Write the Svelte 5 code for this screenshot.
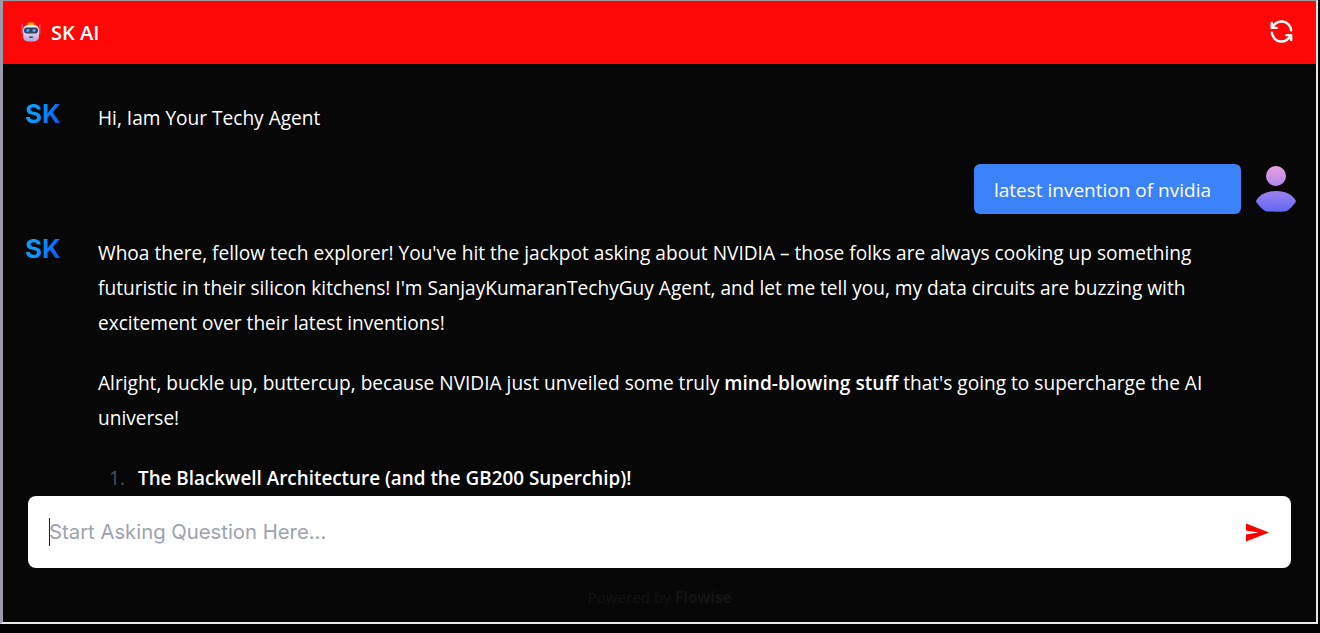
<script>
  let question = $state('');
</script>

<div class="page">
  <div class="frame">
    <header class="head">
      <div class="brand">
        <svg class="bot" viewBox="0 0 20 22" width="20" height="22" aria-hidden="true">
          <defs>
            <linearGradient id="botBody" x1="0" y1="0" x2="0" y2="1">
              <stop offset="0" stop-color="#f3eef6" />
              <stop offset="1" stop-color="#b9a7d6" />
            </linearGradient>
          </defs>
          <rect x="0.5" y="2" width="1.6" height="10" rx="0.8" fill="#e0506e" />
          <rect x="17.9" y="2" width="1.6" height="10" rx="0.8" fill="#e0506e" />
          <rect x="6.5" y="0.5" width="7" height="3" rx="1.5" fill="#ffb020" />
          <rect x="2" y="3" width="16" height="16.5" rx="5" fill="url(#botBody)" />
          <rect x="3" y="5.5" width="14" height="6" rx="3" fill="#33415f" />
          <rect x="5.2" y="7" width="3.4" height="3" rx="1.4" fill="#4aa3f5" />
          <rect x="11.4" y="7" width="3.4" height="3" rx="1.4" fill="#4aa3f5" />
          <rect x="8" y="14.5" width="4" height="1.5" rx="0.7" fill="#33415f" />
        </svg>
        <span class="title">SK AI</span>
      </div>
      <button class="reset" aria-label="Reset chat">
        <svg viewBox="0 0 24 24" width="29" height="29" fill="none" stroke="#fff" stroke-width="2" stroke-linecap="round" stroke-linejoin="round">
          <path d="M19.95 11a8 8 0 0 0 -15.5 -2m-.5 -4v4h4" />
          <path d="M4 13a8 8 0 0 0 15.5 2m.5 4v-4h-4" />
        </svg>
      </button>
    </header>

    <main class="chat">
      <div class="messages">
        <div class="row bot-row">
          <span class="sk">SK</span>
          <div class="text"><p class="first">Hi, Iam Your Techy Agent</p></div>
        </div>
        <div class="row user-row">
          <div class="bubble">latest invention of nvidia</div>
          <svg class="user" viewBox="0 0 40 46" width="40" height="46" aria-hidden="true">
            <defs>
              <linearGradient id="userFill" gradientUnits="userSpaceOnUse" x1="0" y1="0" x2="0" y2="46">
                <stop offset="0" stop-color="#ec9fe0" />
                <stop offset="1" stop-color="#5f68f5" />
              </linearGradient>
            </defs>
            <circle cx="20" cy="10" r="10" fill="url(#userFill)" />
            <path d="M20 25C10 25 3 29 0 35c0 1.500 5 7 9 10 1.500 1 20.500 1 22 0 4-3 9-8.500 9-10C37 29 30 25 20 25z" fill="url(#userFill)" />
          </svg>
        </div>
        <div class="row bot-row third">
          <span class="sk">SK</span>
          <div class="text">
            <p class="first">Whoa there, fellow tech explorer! You've hit the jackpot asking about NVIDIA – those folks are always cooking up something futuristic in their silicon kitchens! I'm SanjayKumaranTechyGuy Agent, and let me tell you, my data circuits are buzzing with excitement over their latest inventions!</p>
            <p>Alright, buckle up, buttercup, because NVIDIA just unveiled some truly <strong>mind-blowing stuff</strong> that's going to supercharge the AI universe!</p>
            <ol>
              <li><strong>The Blackwell Architecture (and the GB200 Superchip)!</strong></li>
            </ol>
          </div>
        </div>
      </div>

      <form class="composer" onsubmit={(e) => e.preventDefault()}>
        <input class="field" placeholder="Start Asking Question Here..." bind:value={question} />
        <button class="send" aria-label="Send">
          <svg viewBox="0 0 24 19" width="23" height="19"><path d="M0 0 24 9.500 0 19V11.500L13 9.500 0 7.500z" fill="#ff0000" /></svg>
        </button>
      </form>

      <footer class="powered">Powered by <b>Flowise</b></footer>
    </main>
  </div>
</div>

<style>
  :global(body) {
    margin: 0;
    background: #000;
  }
  .page {
    height: 633px;
    box-sizing: border-box;
    padding: 0 2px 9px 0;
    overflow: hidden;
  }
  .frame {
    height: 100%;
    box-sizing: border-box;
    display: flex;
    flex-direction: column;
    border-top: 1px solid #9a9a9a;
    border-left: 3px solid #9a9cae;
    border-right: 2px solid #e8e8e8;
    border-bottom: 2px solid #e8e8e8;
    background: #070707;
    font-family: "Open Sans", sans-serif;
    color: #fff;
    overflow: hidden;
  }
  .head {
    flex: none;
    height: 63px;
    background: #ff0707;
    display: flex;
    align-items: center;
    justify-content: space-between;
    padding: 0 20px 2px 18px;
    box-sizing: border-box;
  }
  .brand {
    display: flex;
    align-items: center;
    gap: 10px;
    margin-top: 2px;
  }
  .bot {
    display: block;
  }
  .title {
    font-size: 20px;
    font-weight: 600;
  }
  .reset {
    background: none;
    border: 0;
    padding: 0;
    display: flex;
  }
  .chat {
    position: relative;
    flex: 1;
    min-height: 0;
  }
  .messages {
    height: 424px;
    overflow: hidden;
    padding: 37px 20px 0 23px;
    box-sizing: border-box;
  }
  .row {
    display: flex;
  }
  .bot-row {
    align-items: flex-start;
  }
  .third {
    margin-top: 22px;
  }
  .user-row {
    justify-content: flex-end;
    align-items: center;
    gap: 15px;
    margin-top: 28px;
  }
  .sk {
    flex: none;
    width: 73px;
    margin: -3px 0 0 -1px;
    font-family: "Inter", sans-serif;
    font-size: 26px;
    font-weight: 700;
    line-height: 32px;
    background: linear-gradient(110deg, #0a9bff 0 35%, #0050ff 100%);
    background-size: 36px 100%;
    background-repeat: no-repeat;
    -webkit-background-clip: text;
    background-clip: text;
    color: transparent;
  }
  .text {
    flex: 1;
    max-width: 1150px;
    font-size: 19.1px;
    line-height: 35px;
  }
  strong {
    font-weight: 600;
  }
  li strong {
    font-size: 18.85px;
  }
  p {
    margin: 25px 0 0;
  }
  p.first {
    margin: 0;
  }
  ol {
    margin: 25px 0 0;
    padding: 0 0 0 40px;
  }
  li::marker {
    content: counter(list-item) ".  \2009";
    color: #4b5563;
    font-weight: 400;
  }
  .bubble {
    background: #3b82f6;
    border-radius: 6px;
    padding: 0 30px 0 20px;
    height: 50px;
    line-height: 52px;
    font-size: 19px;
  }
  .composer {
    position: absolute;
    left: 25px;
    right: 25px;
    top: 432px;
    height: 72px;
    background: #fff;
    border-radius: 8px;
    display: flex;
    align-items: center;
    padding: 0 22px 0 21px;
    box-sizing: border-box;
  }
  .field {
    flex: 1;
    border: 0;
    outline: 0;
    background: transparent;
    font-family: "Inter", sans-serif;
    font-size: 20.3px;
    padding: 0 0 2px;
    box-sizing: border-box;
    text-indent: -1px;
    color: #111;
    border-left: 1px solid #222;
    height: 28px;
  }
  .field::placeholder {
    color: #9ca3af;
  }
  .send {
    background: none;
    border: 0;
    padding: 0;
    display: flex;
  }
  .powered {
    position: absolute;
    left: 0;
    right: 0;
    top: 523px;
    text-align: center;
    font-size: 15.2px;
    color: #141414;
  }
</style>
